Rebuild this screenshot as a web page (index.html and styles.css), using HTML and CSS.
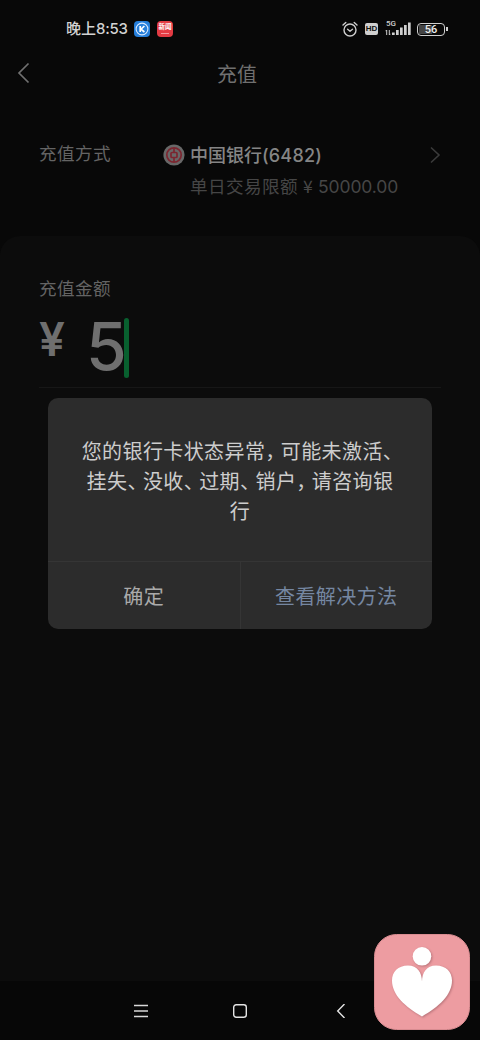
FILE: index.html
```html
<!DOCTYPE html>
<html lang="zh-CN">
<head>
<meta charset="utf-8">
<title>充值</title>
<link rel="stylesheet" href="styles.css">
</head>
<body>
<div class="screen">
  <div class="status">
    <span class="time">晚上<span>8:53</span></span>
    <svg class="app-k" width="16" height="16" viewBox="0 0 16 16"><rect width="16" height="16" rx="4" fill="#267fdb"/><circle cx="8" cy="8" r="5.9" fill="none" stroke="#d9eaff" stroke-width="1.1"/><path d="M6.2 5v6M10.4 5 7 8.2l3.4 2.8" fill="none" stroke="#fff" stroke-width="1.7"/></svg>
    <span class="app-news"><b>新闻</b><i></i></span>
    <div class="indicators">
      <svg class="alarm" width="16" height="17" viewBox="0 0 16 17" fill="none" stroke="#cfcfcf" stroke-width="1.4" stroke-linecap="round" stroke-linejoin="round"><circle cx="8" cy="9" r="6"/><path d="M5.6 8.2 8 10.2l2.5-2M1 4 3.8 1.5M15 4l-2.8-2.5"/></svg>
      <span class="hd">HD</span>
      <div class="signal">
        <span class="net">5G</span>
        <svg width="26" height="15" viewBox="0 0 26 15"><path d="M1.7 14V9M.5 10.2 1.7 9M4.3 9v5M5.5 12.8 4.3 14" fill="none" stroke="#cfcfcf" stroke-width="1"/><path d="M7 11.5h2.7V14H7zM11 9h2.7v5H11zM15 6.500h2.7V14H15zM19 4h2.700v10H19zM23 1.500h2.700V14H23z" fill="#cfcfcf"/></svg>
      </div>
      <div class="battery"><span>56</span></div>
    </div>
  </div>
  <header class="header">
    <svg width="14" height="22" viewBox="0 0 14 22"><path d="M12.500 1.500 3 11l9.500 9.500" fill="none" stroke="#707070" stroke-width="1.7"/></svg>
    <h1>充值</h1>
  </header>
  <section class="method">
    <span class="label">充值方式</span>
    <svg class="bank-logo" width="22" height="22" viewBox="0 0 22 22"><circle cx="11" cy="11" r="10.600" fill="#686868"/><circle cx="11" cy="11" r="7.200" fill="none" stroke="#7c2630" stroke-width="1.700"/><rect x="8" y="8.500" width="6" height="5" rx="1" fill="none" stroke="#7c2630" stroke-width="1.700"/><path d="M11 4v4.500M11 13.500V18" stroke="#7c2630" stroke-width="1.700"/></svg>
    <div class="bank">
      <div class="bank-name">中国银行<span>(6482)</span></div>
      <div class="limit">单日交易限额<span class="yuan">¥</span><span class="sum">50000.00</span></div>
    </div>
    <svg class="more" width="11" height="18" viewBox="0 0 11 18"><path d="m1 1.500 8 7.500-8 7.500" fill="none" stroke="#3b3b3b" stroke-width="1.600"/></svg>
  </section>
  <main class="panel">
    <div class="label">充值金额</div>
    <div class="amount"><span class="currency">¥</span><span class="digits">5</span><span class="caret"></span></div>
  </main>
  <nav class="nav">
    <svg width="14" height="14" viewBox="0 0 14 14"><path d="M0 1.500h14M0 7h14M0 12.500h14" stroke="#d8d8d8" stroke-width="1.300"/></svg>
    <svg width="14" height="14" viewBox="0 0 14 14"><rect x=".7" y=".7" width="12.600" height="12.600" rx="2.500" fill="none" stroke="#e4e4e4" stroke-width="1.400"/></svg>
    <svg width="14" height="14" viewBox="0 0 14 14"><path d="M10.500 0 3.700 7l6.800 7" fill="none" stroke="#e4e4e4" stroke-width="1.400"/></svg>
  </nav>
  <div class="dialog">
    <p>您的银行卡状态异常<i>，</i>可能未激活<i>、</i><br>挂失<i>、</i>没收<i>、</i>过期<i>、</i>销户<i>，</i>请咨询银<br>行</p>
    <div class="actions"><button>确定</button><button class="link">查看解决方法</button></div>
  </div>
  <svg class="floating" width="96" height="96" viewBox="0 0 96 96"><rect x=".5" y=".5" width="95" height="95" rx="22" fill="#ed9ca1" stroke="#d98c91"/><g class="mark" fill="#fff"><circle cx="48" cy="22.300" r="9.300"/><path d="M48 47.500C47.900 38.500 43.500 31.500 34 31.500c-10 0-16 6.500-16 15C18 61 31 72.500 48 82.500 65 72.500 78 61 78 46.500c0-8.500-6-15-16-15C52.500 31.500 48.100 38.500 48 47.500z"/></g></svg>
</div>
</body>
</html>
```
FILE: styles.css
```css
* { box-sizing: border-box; }
body { margin: 0; background: #080808; font-family: "Noto Sans CJK SC", sans-serif; }
svg { display: block; flex: none; }
i { font-style: normal; }
.screen { position: relative; width: 480px; height: 1040px; overflow: hidden; display: flex; flex-direction: column; background: #080808; }
.status { height: 50px; padding: 8px 32px 0 66px; display: flex; align-items: center; flex: none; color: #d2d2d2; }
.time { width: 68px; font-size: 15px; line-height: 20px; font-weight: 500; white-space: nowrap; margin-top: -1px; }
.time span { font-family: Inter, sans-serif; font-weight: 500; letter-spacing: -.3px; }
.app-news { width: 16px; height: 16px; margin-left: 7px; border-radius: 4px; background: #e33b43; color: #fff; text-align: center; }
.app-news b { display: block; font-size: 6.5px; line-height: 9px; padding-top: 1px; white-space: nowrap; }
.app-news i { display: block; width: 8px; height: 1px; margin: 2px auto 0; background: #f39a9e; }
.indicators { margin-left: auto; display: flex; align-items: center; }
.hd { width: 13px; height: 12px; margin: 0 7px; border-radius: 2px; background: #cfcfcf; color: #111; font: 700 8px/12px "Liberation Sans", sans-serif; text-align: center; }
.signal { position: relative; width: 26px; height: 16px; margin-right: 6px; }
.net { position: absolute; left: 1px; top: -1px; font: 500 8px/8px Roboto, sans-serif; }
.battery { position: relative; width: 28px; height: 13px; margin-right: 3px; border: 1.500px solid #cfcfcf; border-radius: 4px; padding: 1px; }
.battery::after { content: ""; position: absolute; right: -4px; top: 3px; width: 2px; height: 4px; background: #cfcfcf; }
.battery span { display: block; height: 9px; background: linear-gradient(90deg, #444 56%, transparent 56%); font: 500 11px/10px Roboto, sans-serif; text-align: center; color: #eee; }
.header { height: 48px; padding-left: 16px; display: flex; align-items: center; flex: none; }
.header svg { margin-top: -3px; }
.header h1 { margin: 0 0 0 187px; font-size: 20px; line-height: 24px; font-weight: 400; color: #707070; }
.method { height: 138px; padding: 41px 39px 0; display: flex; align-items: flex-start; flex: none; }
.label { font-size: 17.600px; line-height: 28px; letter-spacing: .4px; color: #646464; }
.method .label { width: 124px; }
.bank-logo { margin-top: 5px; }
.bank { padding: 1px 0 0 5px; width: 245px; white-space: nowrap; flex: none; }
.bank-name { height: 28px; font-size: 18px; line-height: 28px; font-weight: 500; color: #858585; }
.bank-name span { font-family: Inter, sans-serif; font-weight: 500; letter-spacing: .2px; }
.limit { height: 28px; margin-top: 4px; font-size: 17.600px; line-height: 28px; letter-spacing: .4px; color: #464646; }
.yuan { display: inline-block; width: 20px; text-align: center; font-size: 17.600px; }
.sum { font-family: Inter, sans-serif; font-size: 17.500px; letter-spacing: -.1px; }
.more { margin-top: 7px; }
.panel { height: 745px; padding: 38px 39px 0; border-radius: 20px 20px 0 0; background: #0c0c0c; flex: none; }
.amount { height: 76px; padding-top: 6px; margin-top: 9px; display: flex; align-items: flex-start; border-bottom: 1px solid #171717; color: #6f6f6f; }
.panel .label { height: 29px; line-height: 27px; }
.currency { width: 47px; font: 600 46px/42px Inter, sans-serif; }
.digits { width: 38px; font: 500 66px/56px Inter, sans-serif; }
.caret { width: 5px; height: 60px; border-radius: 3px; background: #08602f; }
.nav { height: 59px; padding: 1px 132px 0 134px; display: flex; justify-content: space-between; align-items: center; flex: none; background: #070707; }
.nav svg:nth-child(2) { margin-right: 2px; }
.dialog { position: absolute; left: 48px; top: 398px; width: 384px; height: 231px; border-radius: 10px; background: #2c2c2c; display: flex; flex-direction: column; overflow: hidden; }
.dialog p { margin: 0; height: 163px; padding-top: 38px; text-align: center; white-space: nowrap; font-size: 20px; line-height: 30px; letter-spacing: .4px; color: #cdcdcd; }
.dialog p i { letter-spacing: -4.500px; }
.actions { flex: 1; display: flex; border-top: 1px solid #353535; }
.actions button { flex: 1; padding: 1px 0 0; border: 0; background: none; color: #aaa; font: 400 20px/30px "Noto Sans CJK SC", sans-serif; letter-spacing: .4px; }
.actions .link { border-left: 1px solid #353535; color: #7587a2; }
.floating { position: absolute; left: 374px; top: 934px; }
.mark { filter: drop-shadow(1px 1px 1px #b9747a); }
```
